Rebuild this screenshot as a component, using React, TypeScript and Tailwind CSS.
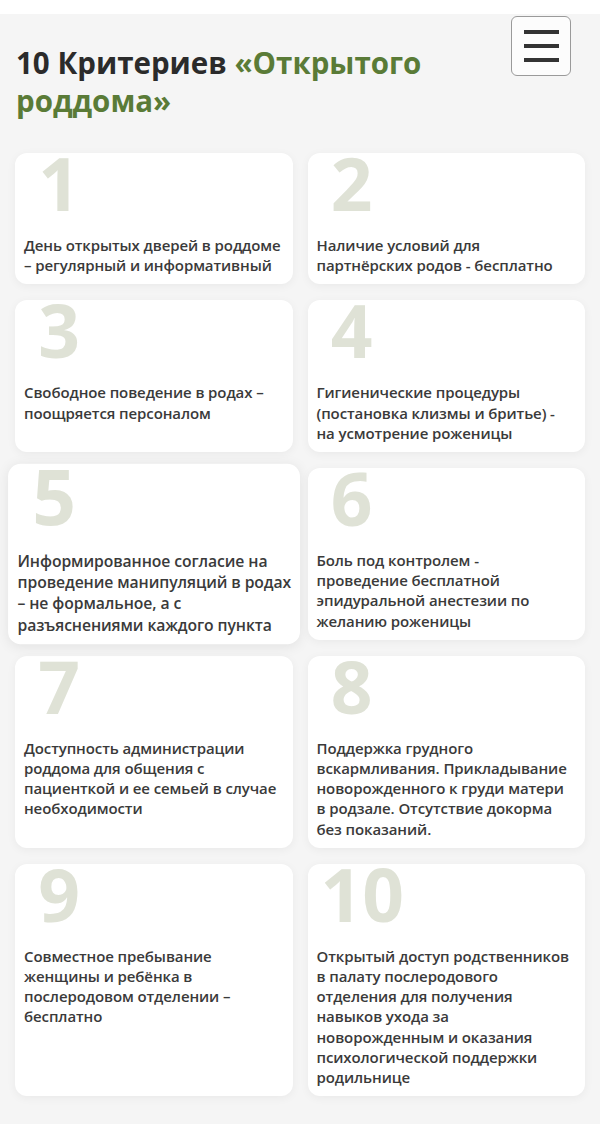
import React from "react";

type Criterion = {
  num: string;
  lines: string[];
  active?: boolean;
};

// строки разбиты как в макете
const criteria: Criterion[] = [
  { num: "1", lines: ["День открытых дверей в роддоме", "– регулярный и информативный"] },
  { num: "2", lines: ["Наличие условий для", "партнёрских родов - бесплатно"] },
  { num: "3", lines: ["Свободное поведение в родах –", "поощряется персоналом"] },
  {
    num: "4",
    lines: [
      "Гигиенические процедуры",
      "(постановка клизмы и бритье) -",
      "на усмотрение роженицы",
    ],
  },
  {
    num: "5",
    lines: [
      "Информированное согласие на",
      "проведение манипуляций в родах",
      "– не формальное, а с",
      "разъяснениями каждого пункта",
    ],
    active: true,
  },
  {
    num: "6",
    lines: [
      "Боль под контролем -",
      "проведение бесплатной",
      "эпидуральной анестезии по",
      "желанию роженицы",
    ],
  },
  {
    num: "7",
    lines: [
      "Доступность администрации",
      "роддома для общения с",
      "пациенткой и ее семьей в случае",
      "необходимости",
    ],
  },
  {
    num: "8",
    lines: [
      "Поддержка грудного",
      "вскармливания. Прикладывание",
      "новорожденного к груди матери",
      "в родзале. Отсутствие докорма",
      "без показаний.",
    ],
  },
  {
    num: "9",
    lines: [
      "Совместное пребывание",
      "женщины и ребёнка в",
      "послеродовом отделении –",
      "бесплатно",
    ],
  },
  {
    num: "10",
    lines: [
      "Открытый доступ родственников",
      "в палату послеродового",
      "отделения для получения",
      "навыков ухода за",
      "новорожденным и оказания",
      "психологической поддержки",
      "родильнице",
    ],
  },
];

const CriterionCard = ({ num, lines, active }: Criterion) => {
  return (
    <div
      className={
        active
          ? "bg-white rounded-xl pl-[9px] pr-[4px] pb-[9px] scale-[1.05] shadow-[0_2px_12px_rgba(0,0,0,0.08)]"
          : "bg-white rounded-xl pl-[9px] pr-[4px] pb-[9px] shadow-[0_2px_10px_rgba(0,0,0,0.05)]"
      }
    >
      <div className="ml-[4px] w-[62px] text-center text-[73px] leading-[60px] font-bold text-[#dfe2d6] whitespace-nowrap">
        {num}
      </div>
      <p className="mt-[22px] text-[15px] leading-[20.2px] font-semibold text-[#3a3a3a] tracking-[-0.1px]">
        {lines.map((line, i) => (
          <span key={i} className="block whitespace-nowrap">
            {line}
          </span>
        ))}
      </p>
    </div>
  );
};

export default function App() {
  return (
    <div
      className="min-h-[1124px] bg-[#f5f5f5]"
      style={{ fontFamily: '"Open Sans", "Noto Sans", sans-serif' }}
    >
      <div className="h-[14px] bg-white" />
      <header className="flex justify-between items-start pl-4 pr-[29px] pt-[2px]">
        <h1 className="mt-[28px] w-[460px] text-[29.5px] leading-[38px] font-bold text-[#2b2b2b]">
          10 Критериев{" "}
          <span className="text-[#5a7b37]">«Открытого роддома»</span>
        </h1>
        <button className="w-[60px] h-[60px] rounded-md border border-[#9a9a9a] bg-[#fcfcfc] flex flex-col items-center justify-center gap-[10px]">
          <span className="block w-[35px] h-[4px] bg-[#333]" />
          <span className="block w-[35px] h-[4px] bg-[#333]" />
          <span className="block w-[35px] h-[4px] bg-[#333]" />
        </button>
      </header>
      <main className="grid grid-cols-2 gap-x-[15px] gap-y-4 px-[15px] mt-[33px] pb-6">
        {criteria.map((c) => (
          <CriterionCard key={c.num} {...c} />
        ))}
      </main>
    </div>
  );
}
